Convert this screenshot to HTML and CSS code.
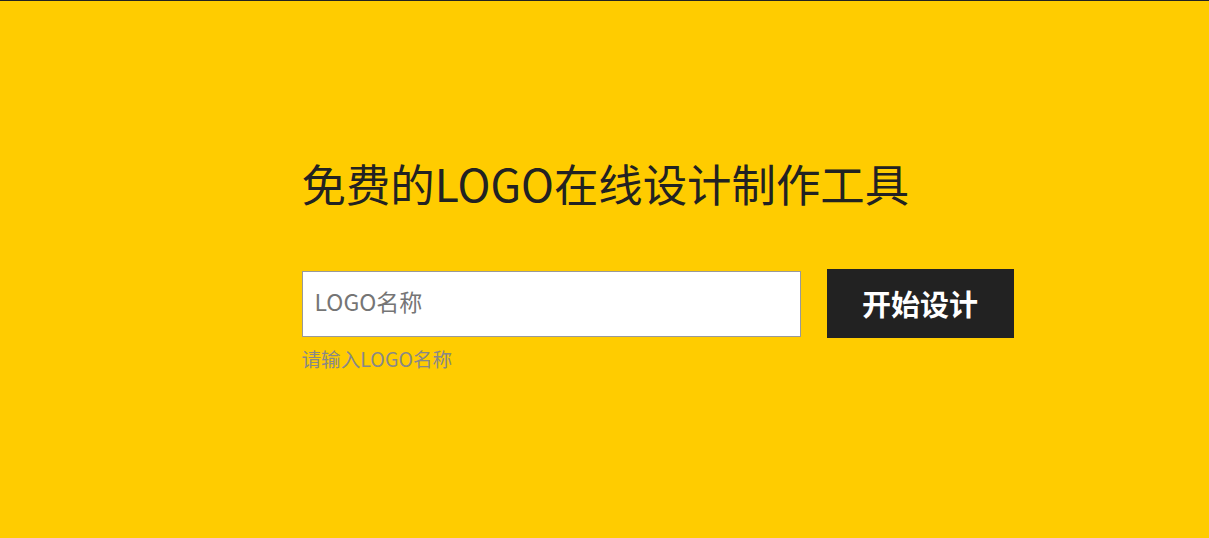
FILE: index.html
```html
<!DOCTYPE html>
<html lang="zh-CN">
<head>
<meta charset="utf-8">
<title>免费的LOGO在线设计制作工具</title>
<link rel="stylesheet" href="styles.css">
</head>
<body>
<main class="hero">
  <div class="hero-inner">
    <h1 class="hero-title">免费的LOGO在线设计制作工具</h1>
    <form class="logo-form" onsubmit="return false;">
      <div class="form-row">
        <input class="logo-input" type="text" placeholder="LOGO名称">
        <button class="start-btn" type="submit">开始设计</button>
      </div>
      <p class="form-hint">请输入LOGO名称</p>
    </form>
  </div>
</main>
</body>
</html>
```

FILE: styles.css
```css
html, body {
  margin: 0;
  padding: 0;
  height: 100%;
}

body {
  background: #ffcc00;
  border-top: 1px solid #222;
  box-sizing: border-box;
  font-family: "Noto Sans CJK SC", "Noto Sans", sans-serif;
  color: #222;
}

.hero {
  padding-top: 148px;
}

.hero-inner {
  width: 606px;
  margin: 0 auto;
}

.hero-title {
  margin: 0;
  font-size: 44.4px;
  line-height: 68px;
  font-weight: 400;
  color: #222;
  white-space: nowrap;
}

.logo-form {
  margin-top: 52px;
}

.form-row {
  display: flex;
  align-items: center;
  gap: 26px;
}

.logo-input {
  box-sizing: border-box;
  width: 499px;
  height: 66px;
  flex: none;
  border: 1px solid #999;
  background: #fff;
  padding: 0 12px 6px;
  font-family: "Noto Sans CJK SC", sans-serif;
  font-size: 23px;
  color: #333;
  outline: none;
  border-radius: 0;
}

.logo-input::placeholder {
  color: #757575;
}

.start-btn {
  flex: none;
  width: 187px;
  height: 69px;
  border: 0;
  border-radius: 0;
  background: #222;
  color: #fff;
  font-family: "Noto Sans CJK SC", sans-serif;
  font-size: 29px;
  font-weight: 700;
  padding: 0 0 2px;
  cursor: pointer;
}

.form-hint {
  margin: 6px 0 0;
  font-size: 19.6px;
  line-height: 30px;
  color: #888;
}
```
